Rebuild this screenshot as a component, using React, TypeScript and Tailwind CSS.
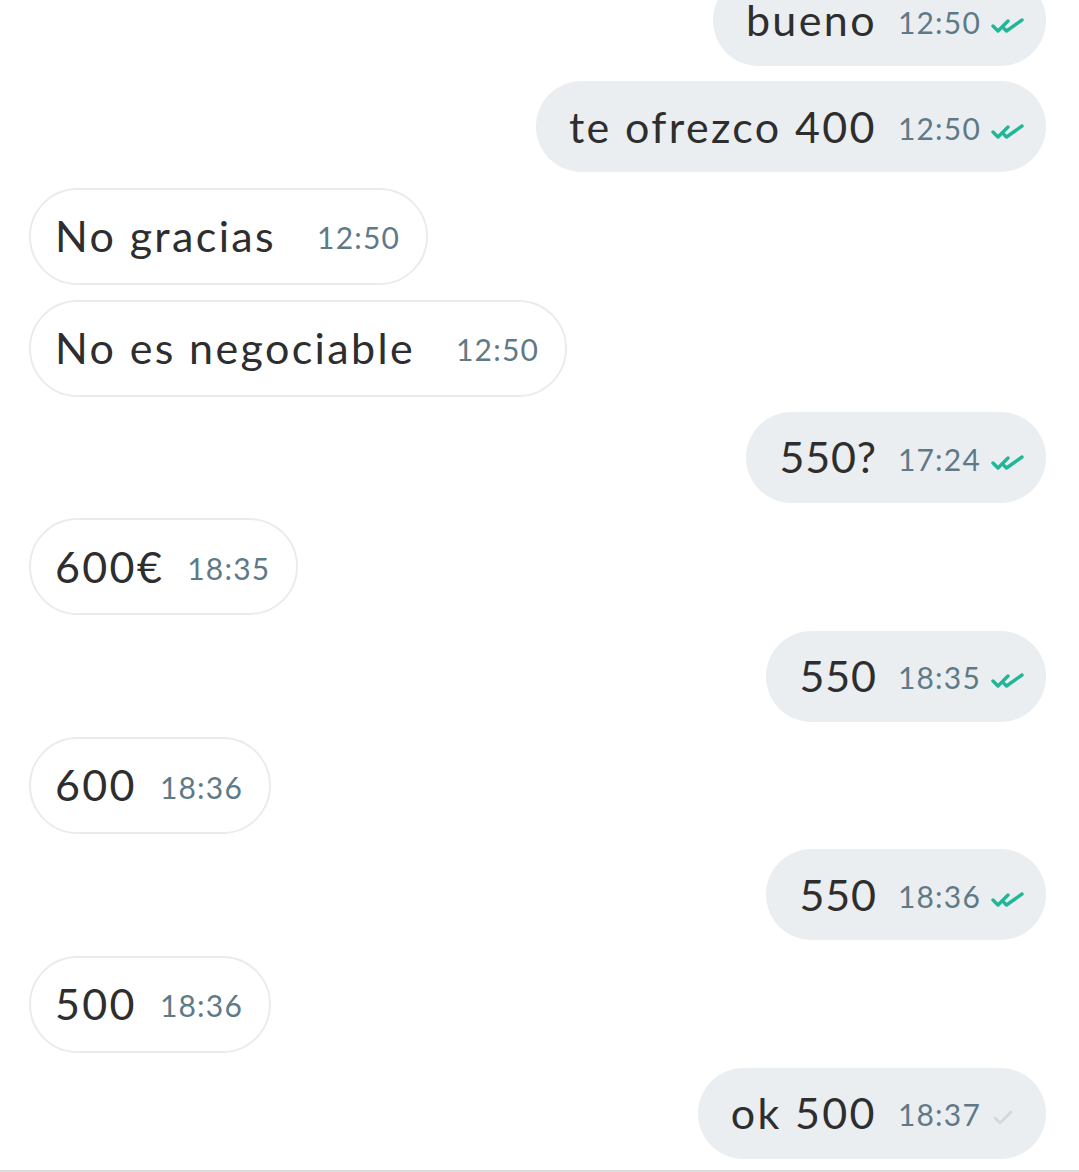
import React from 'react';

type Msg = { text: string; time: string; mine: boolean; read?: boolean; loose?: boolean };

const MESSAGES: Msg[] = [
  { text: 'bueno', time: '12:50', mine: true, read: true },
  { text: 'te ofrezco 400', time: '12:50', mine: true, read: true },
  { text: 'No gracias', time: '12:50', mine: false, loose: true },
  { text: 'No es negociable', time: '12:50', mine: false, loose: true },
  { text: '550?', time: '17:24', mine: true, read: true },
  { text: '600€', time: '18:35', mine: false },
  { text: '550', time: '18:35', mine: true, read: true },
  { text: '600', time: '18:36', mine: false },
  { text: '550', time: '18:36', mine: true, read: true },
  { text: '500', time: '18:36', mine: false },
  { text: 'ok 500', time: '18:37', mine: true, read: false },
];

const isNumber = (s: string) => /^[\d?€]+$/.test(s);

const DoubleCheck = () => (
  <svg width="34" height="18" viewBox="0 0 34 18" fill="none" stroke="#22b698" strokeWidth="3.4" strokeLinecap="round" strokeLinejoin="round">
    <path d="M2 10 L7 15 L17 5" />
    <path d="M13 12.5 L15.5 15 L31 4" />
  </svg>
);

const SingleCheck = () => (
  <svg width="34" height="18" viewBox="0 0 34 18" fill="none" stroke="#d3d7da" strokeWidth="2.5" strokeLinecap="round" strokeLinejoin="round">
    <path d="M4 10 L9 15 L20 4" />
  </svg>
);

const Bubble: React.FC<{ msg: Msg }> = ({ msg }) => {
  if (msg.mine) {
    return (
      <div className="flex justify-end pr-[33px]">
        <div className="flex h-[91px] items-center rounded-full bg-[#ebeef1] pl-[33px] pr-[21px]">
          <span className={`text-[43px] text-[#2e2e2e] ${isNumber(msg.text) ? 'tracking-[0.02em]' : 'tracking-[0.055em]'}`}>{msg.text}</span>
          <span className="ml-[21px] pt-[3px] text-[30px] tracking-[0.04em] text-[#5f7a87]">{msg.time}</span>
          <span className="ml-[10px] pt-[8px]">{msg.read ? <DoubleCheck /> : <SingleCheck />}</span>
        </div>
      </div>
    );
  }
  return (
    <div className="flex justify-start pl-[29px]">
      <div className="flex h-[97px] items-center rounded-full border-2 border-[#e9ecee] bg-white pl-[24px] pr-[26px]">
        <span className="text-[43px] tracking-[0.055em] text-[#2e2e2e]">{msg.text}</span>
        <span className={`pt-[3px] text-[30px] tracking-[0.04em] text-[#5f7a87] ${msg.loose ? 'ml-[41px]' : 'ml-[23px]'}`}>{msg.time}</span>
      </div>
    </div>
  );
};

export default function App() {
  return (
    <div className="h-[1172px] w-[1079px] overflow-hidden bg-white font-['Lato','Noto_Sans',sans-serif]">
      <div className="flex h-[1170px] flex-col overflow-hidden">
        <div className="-mt-[25px] flex flex-col gap-[15.3px]">
          {MESSAGES.map((m, i) => (
            <Bubble key={i} msg={m} />
          ))}
        </div>
      </div>
      <div className="h-[2px] bg-[#dcdcdc]" />
    </div>
  );
}
